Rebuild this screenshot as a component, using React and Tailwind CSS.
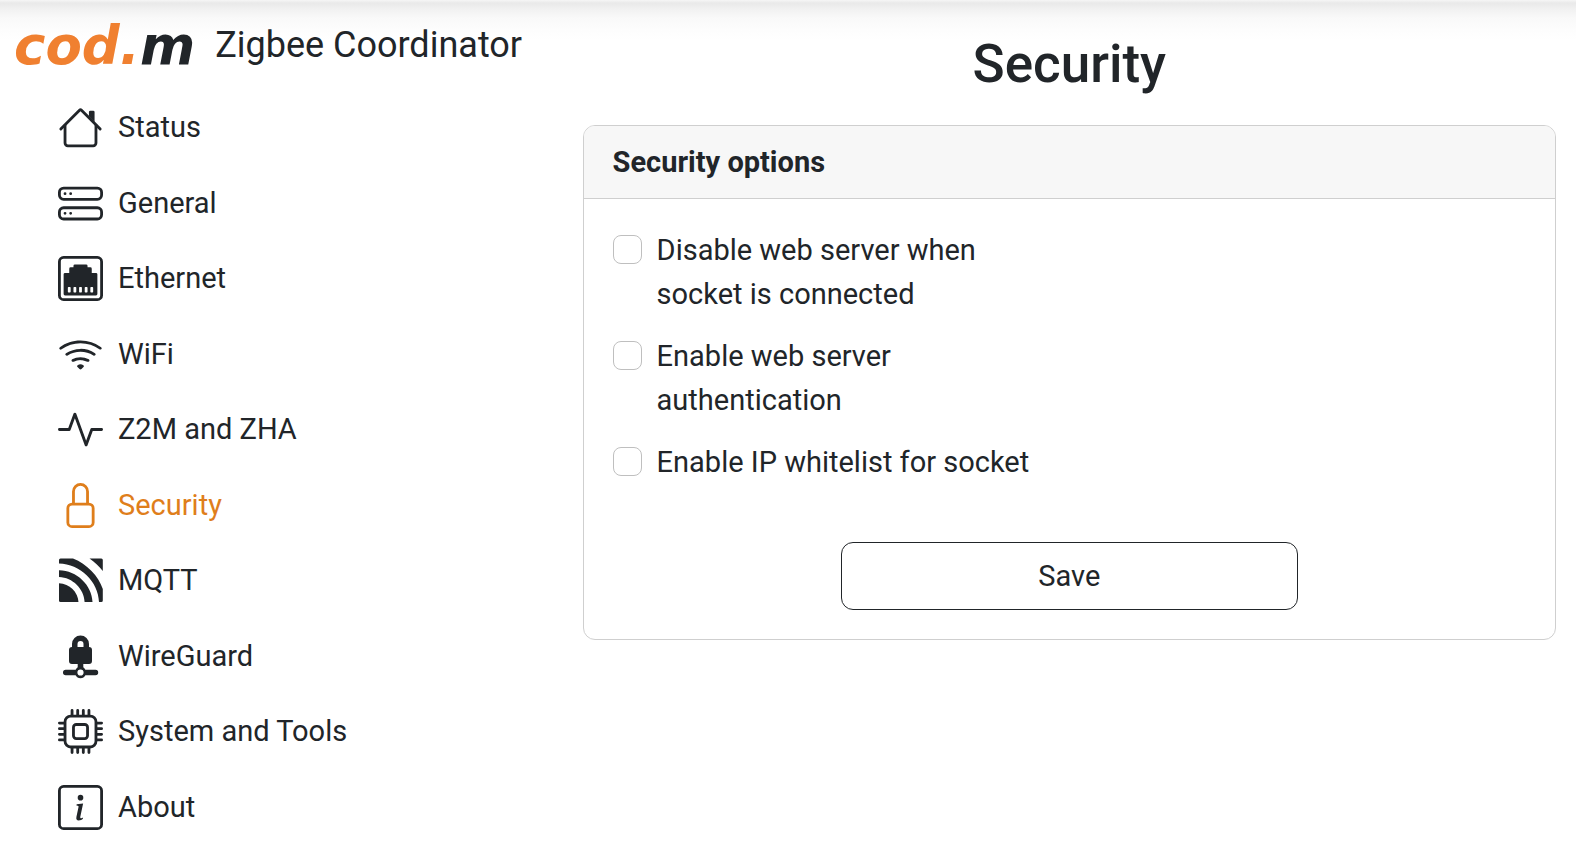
import { BsActivity, BsCpu, BsEthernet, BsHddStack, BsInfoSquare, BsLock, BsWifi } from "react-icons/bs";

function HouseIcon(props) {
  return (
    <svg viewBox="0 0 16 16" fill="currentColor" {...props}>
      <path fillRule="evenodd" d="M2 13.5V7h1v6.5a.5.5 0 0 0 .5.5h9a.5.5 0 0 0 .5-.5V7h1v6.5a1.5 1.5 0 0 1-1.5 1.5h-9A1.5 1.5 0 0 1 2 13.5zm11-11V6l-2-2V2.5a.5.5 0 0 1 .5-.5h1a.5.5 0 0 1 .5.5z" />
      <path fillRule="evenodd" d="M7.293 1.5a1 1 0 0 1 1.414 0l6.647 6.646a.5.5 0 0 1-.708.708L8 2.207 1.354 8.854a.5.5 0 1 1-.708-.708L7.293 1.5z" />
    </svg>
  );
}

function MqttIcon(props) {
  return (
    <svg viewBox="0 0 45 45" fill="currentColor" {...props}>
      <path d="M1 25.200C11.500 25.600 20 34 20.500 44H2.500A1.500 1.500 0 0 1 1 42.500Z" />
      <path d="M1 12.300C19 12.700 33.800 27 34.500 44H26.600C26 31 14.800 19.500 1 19.100Z" />
      <path d="M1 2A1.500 1.500 0 0 1 2.500 .5H15C29 6 40.500 18 44.800 31V42.500A1.500 1.500 0 0 1 43.300 44H41C40.500 23.500 22 6 1 5.500Z" />
      <path d="M31.500 .5H43.300A1.500 1.500 0 0 1 44.800 2V13C41 8 36.500 4.200 31.500 .5Z" />
    </svg>
  );
}

function WireGuardIcon(props) {
  return (
    <svg viewBox="0 0 45 45" fill="currentColor" {...props}>
      <path fillRule="evenodd" d="M14 13V10a8.500 8.500 0 0 1 17 0V13A3 3 0 0 1 34 16V27A3 3 0 0 1 31 30H25.300V33.200A5.500 5.500 0 0 1 27.400 35.800H37.500a2.700 2.700 0 0 1 0 5.400H27.400a5.500 5.500 0 0 1-9.800 0H7.700a2.700 2.700 0 0 1 0-5.400H17.600A5.500 5.500 0 0 1 19.700 33.200V30H14A3 3 0 0 1 11 27V16A3 3 0 0 1 14 13ZM19.500 13H25.500V10a3 3 0 0 0-6 0ZM22.500 35.400a3.100 3.100 0 1 0 0 6.200a3.100 3.100 0 0 0 0-6.200Z" />
    </svg>
  );
}

const navItems = [
  { label: "Status", Icon: HouseIcon },
  { label: "General", Icon: BsHddStack },
  { label: "Ethernet", Icon: BsEthernet },
  { label: "WiFi", Icon: BsWifi },
  { label: "Z2M and ZHA", Icon: BsActivity },
  { label: "Security", Icon: BsLock, active: true },
  { label: "MQTT", Icon: MqttIcon },
  { label: "WireGuard", Icon: WireGuardIcon },
  { label: "System and Tools", Icon: BsCpu },
  { label: "About", Icon: BsInfoSquare },
];

const options = [
  { id: "disable-web", label: "Disable web server when socket is connected" },
  { id: "web-auth", label: "Enable web server authentication" },
  { id: "ip-whitelist", label: "Enable IP whitelist for socket" },
];

export default function App() {
  return (
    <div className="min-h-screen bg-white bg-[linear-gradient(to_bottom,#f6f6f6_0px,#e9e9e9_3px,#f2f2f2_10px,#f9f9f9_18px,#fdfdfd_30px,#ffffff_40px)] bg-no-repeat font-['Roboto',sans-serif] text-[29px] leading-normal text-[#212529]">
      <div className="flex">
        <aside className="w-[35%] shrink-0">
          <a href="#status" className="flex h-[90px] items-center gap-5 pl-[14px] whitespace-nowrap">
            <span className="font-['DejaVu_Sans',sans-serif] text-[53px] leading-none font-bold text-[#212529] italic">
              <span className="text-[#f08030]">cod.</span>m
            </span>
            <span className="text-4xl">Zigbee Coordinator</span>
          </a>
          <nav aria-label="Main">
            <ul className="pl-[58px]">
              {navItems.map(({ label, Icon, active }) => (
                <li key={label}>
                  <a
                    href={"#" + label.toLowerCase().replaceAll(" ", "-")}
                    aria-current={active ? "page" : undefined}
                    className={active ? "flex items-center gap-[15px] py-4 text-[#df7e1b]" : "flex items-center gap-[15px] py-4"}
                  >
                    <Icon className="-my-1 size-[45px] shrink-0" aria-hidden="true" />
                    {label}
                  </a>
                </li>
              ))}
            </ul>
          </nav>
        </aside>
        <main className="min-w-0 flex-1 pt-[33px] pr-5 pl-[31px]">
          <h1 className="mb-[29px] text-center text-[53px] leading-[63px] font-medium">Security</h1>
          <section className="overflow-hidden rounded-xl border border-[#cfcfcf] bg-white leading-[44px]">
            <h2 className="border-b border-[#cfcfcf] bg-[#f7f7f7] px-[29px] py-[14px] font-bold">Security options</h2>
            <form className="p-[29px]" onSubmit={(event) => event.preventDefault()}>
              <div className="flex flex-col gap-[18px]">
                {options.map(({ id, label }) => (
                  <div key={id} className="flex max-w-[440px] items-start gap-[15px]">
                    <input
                      id={id}
                      type="checkbox"
                      className="mt-[7px] size-[29px] shrink-0 appearance-none rounded-lg border border-[#bfbfbf] bg-white checked:bg-[#df7e1b]"
                    />
                    <label htmlFor={id}>{label}</label>
                  </div>
                ))}
              </div>
              <button type="submit" className="mx-auto mt-[58px] block w-1/2 rounded-xl border border-[#212529] py-[11px]">
                Save
              </button>
            </form>
          </section>
        </main>
      </div>
    </div>
  );
}
